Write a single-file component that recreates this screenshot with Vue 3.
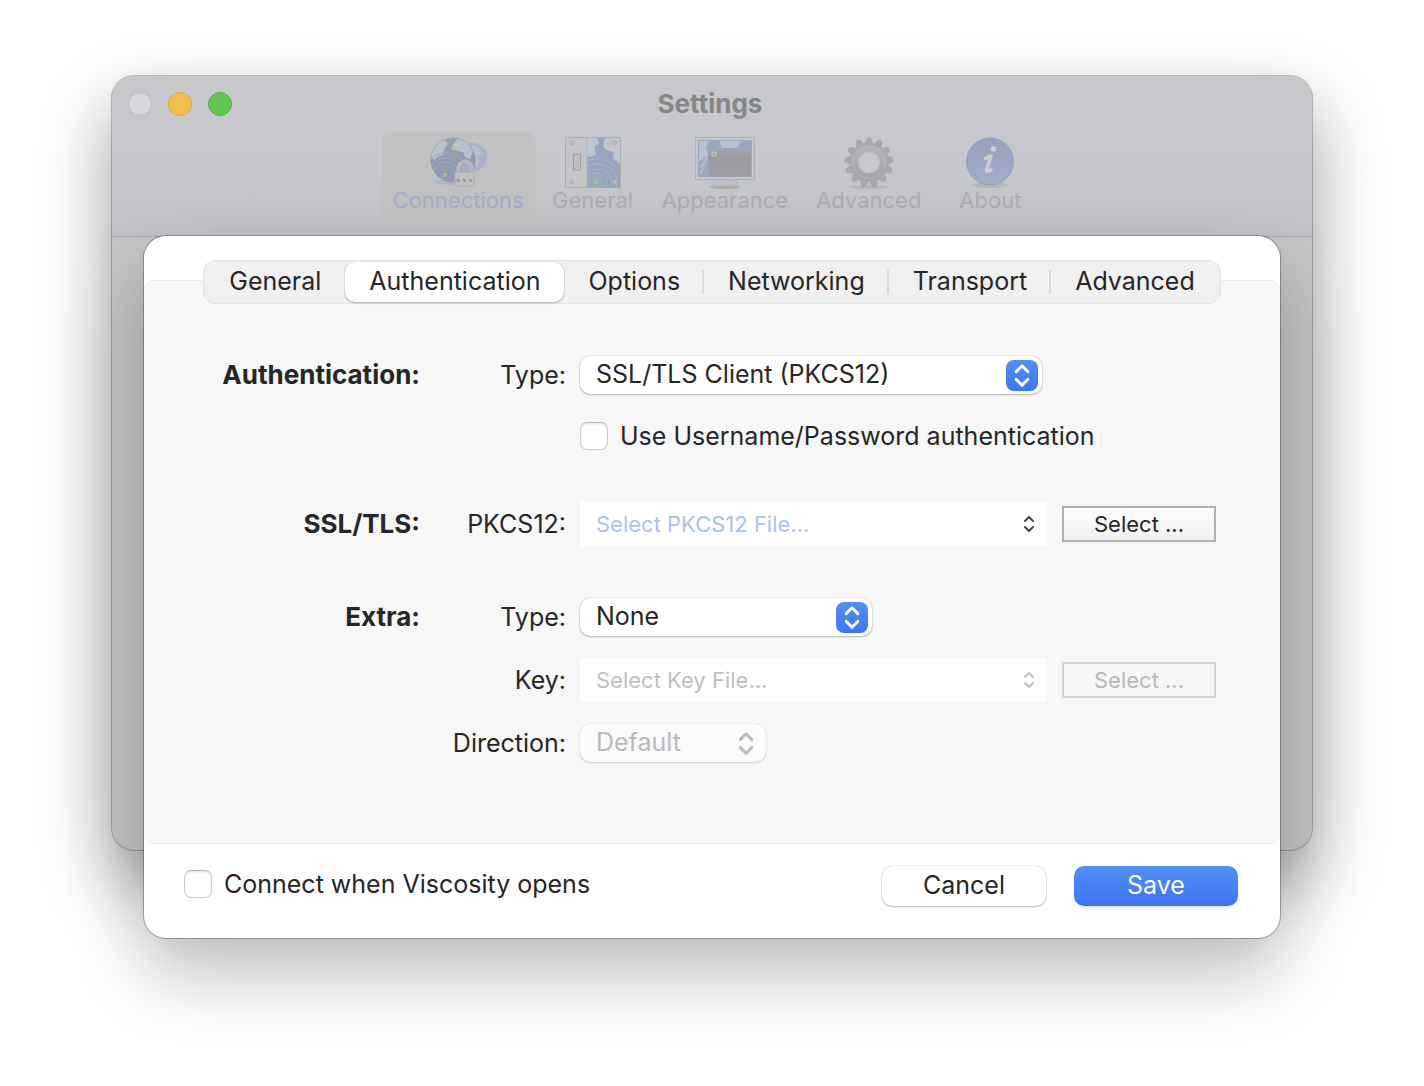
<script setup>
import { ref } from 'vue'

const tools = ['Connections', 'General', 'Appearance', 'Advanced', 'About']
const tabs = ['General', 'Authentication', 'Options', 'Networking', 'Transport', 'Advanced']
const activeTool = ref('Connections')
const activeTab = ref('Authentication')
const usePassword = ref(false)
const autoConnect = ref(false)
</script>

<template>
  <main class="stage">
    <section class="window">
      <header class="titlebar">
        <div class="title-row">
          <div class="lights">
            <button type="button" class="light close" aria-label="Close"></button>
            <button type="button" class="light minimise" aria-label="Minimise"></button>
            <button type="button" class="light zoom" aria-label="Zoom"></button>
          </div>
          <h1>Settings</h1>
        </div>
        <nav class="toolbar">
          <button
            v-for="tool in tools"
            :key="tool"
            type="button"
            class="tool"
            :class="{ active: tool === activeTool }"
            @click="activeTool = tool"
          >
            <svg v-if="tool === 'Connections'" class="tool-icon" viewBox="0 0 60 54" aria-hidden="true">
              <defs>
                <linearGradient id="globe" x1="0" y1="0" x2="0" y2="1">
                  <stop offset="0" stop-color="#8793ad" />
                  <stop offset="1" stop-color="#7480a8" />
                </linearGradient>
                <clipPath id="globe-clip"><circle cx="25" cy="24" r="22" /></clipPath>
              </defs>
              <ellipse cx="26" cy="46" rx="20" ry="3" fill="#a6a6a8" opacity=".6" />
              <circle cx="45" cy="21" r="14" fill="#a0abc2" />
              <path d="M42 9l9 2 4 6-5 3 2 6-5 6-4-9z" fill="#b4bec9" />
              <circle cx="25" cy="24" r="22.5" fill="url(#globe)" />
              <g clip-path="url(#globe-clip)">
                <path d="M6 8l10-5 4 5-4 5-1 6-4 1-5 4-5-6zM30 2l10 4 5 9-3 8-5-2-2-5-6-1-4-6z" fill="#b7c3cc" />
                <g fill="none" stroke="#8f9cbc">
                  <circle cx="18" cy="39" r="5" /><circle cx="18" cy="39" r="9" />
                  <circle cx="18" cy="39" r="13" /><circle cx="18" cy="39" r="17" /><circle cx="18" cy="39" r="22" />
                </g>
                <circle cx="26" cy="12" r="2.4" fill="#c7bb92" /><circle cx="17" cy="39" r="2.4" fill="#85bd8b" />
              </g>
              <path d="M30 37v-5a7 7 0 0 1 14 0v5" fill="#9ca7be" stroke="#b8b7b5" stroke-width="3" />
              <rect x="27" y="36" width="19" height="14" rx="1" fill="#c3c2c3" stroke="#a2a2a5" />
              <path d="M28 43h3l2 3h-4zM34 43h3l2 3h-3zM40 43h3l2 3h-3z" fill="#888a9a" />
            </svg>

            <svg v-else-if="tool === 'General'" class="tool-icon" viewBox="0 0 60 54" aria-hidden="true">
              <defs><clipPath id="plate"><rect x="24" y="2" width="33" height="49" /></clipPath></defs>
              <rect x="24" y="1" width="34" height="50" fill="#8797bb" />
              <g clip-path="url(#plate)">
                <path d="M24 1h10l2 7-5 2 2 8-5 3-4-1zM42 1h16v29l-5-6-3-1 1-7-8-2-3-4z" fill="#bdc7d0" />
                <g fill="none" stroke="#9daac5">
                  <ellipse cx="33" cy="46" rx="6" ry="5" /><ellipse cx="33" cy="46" rx="11" ry="9" />
                  <ellipse cx="33" cy="46" rx="16" ry="13" /><ellipse cx="33" cy="46" rx="21" ry="18" />
                  <ellipse cx="33" cy="46" rx="27" ry="23" />
                </g>
                <circle cx="33" cy="46" r="2.8" fill="#8dbd91" /><circle cx="46" cy="9" r="2.5" fill="#c5bd9c" />
              </g>
              <rect x="3" y="2" width="21" height="49" fill="#c4c4c5" />
              <rect x="2.5" y="1.5" width="55" height="50" fill="none" stroke="#a2a39f" />
              <path d="M24 1v50" stroke="#acadad" />
              <rect x="10.5" y="18" width="7" height="16" fill="#bcbcbd" stroke="#919193" />
              <path d="M12 26h4" stroke="#b0b0b2" />
              <g fill="#bcbcbd" stroke="#a4a4a7">
                <circle cx="8.5" cy="7" r="2" /><circle cx="8.5" cy="46" r="2" />
                <circle cx="52" cy="7" r="2" /><circle cx="52" cy="46" r="2" />
              </g>
            </svg>

            <svg v-else-if="tool === 'Appearance'" class="tool-icon" viewBox="0 0 60 54" aria-hidden="true">
              <defs>
                <linearGradient id="screen" x1="0" y1="0" x2="0" y2="1">
                  <stop offset="0" stop-color="#9a9a9d" /><stop offset=".3" stop-color="#88888b" /><stop offset="1" stop-color="#8e8e91" />
                </linearGradient>
              </defs>
              <ellipse cx="30" cy="51" rx="15" ry="2" fill="#a0a0a2" />
              <path d="M20 43h20l3 7H17z" fill="#bebec0" stroke="#acacae" />
              <rect x=".5" y="1.5" width="59" height="42" fill="#c5c6c7" stroke="#a6a7a8" />
              <rect x="3" y="4" width="54" height="37" fill="#8d9ab5" />
              <path d="M4 5h10l-3 7 2 7-9 7zM24 5h22l-5 7H27z" fill="#b3c0cf" />
              <path d="M4 38c6-4 4-10 8-15M5 31c5-2 4-9 8-12" fill="none" stroke="#a8b5ca" stroke-width="2" />
              <path d="M14 16l3-3h39v27H14z" fill="url(#screen)" />
              <circle cx="19" cy="18" r="2" fill="none" stroke="#b9bec0" stroke-width="1.5" />
            </svg>

            <svg v-else-if="tool === 'Advanced'" class="tool-icon" viewBox="0 0 60 54" aria-hidden="true">
              <defs>
                <linearGradient id="gear" gradientUnits="userSpaceOnUse" x1="0" y1="2" x2="0" y2="52">
                  <stop offset="0" stop-color="#acadb0" /><stop offset=".4" stop-color="#a6a7ab" /><stop offset="1" stop-color="#8d8e94" />
                </linearGradient>
              </defs>
              <ellipse cx="30" cy="51" rx="20" ry="2" fill="#aeaeb0" />
              <circle cx="30" cy="26.5" r="15" fill="none" stroke="url(#gear)" stroke-width="9" />
              <g fill="#9c9da1">
                <path
                  v-for="n in 13"
                  :key="n"
                  d="M25 9l2-5q.5-2.500 3-2.500t3 2.500l2 5z"
                  :transform="`rotate(${(n - 1) * 27.7} 30 26.5)`"
                />
              </g>
              <circle cx="30" cy="26.5" r="16" fill="none" stroke="#b0b1b4" />
              <circle cx="30" cy="26.5" r="10.5" fill="#c9cacd" stroke="#bcbdc0" />
            </svg>

            <svg v-else class="tool-icon" viewBox="0 0 60 54" aria-hidden="true">
              <defs>
                <linearGradient id="info" x1="0" y1="0" x2="0" y2="1">
                  <stop offset="0" stop-color="#8492b5" /><stop offset="1" stop-color="#93a2c9" />
                </linearGradient>
              </defs>
              <ellipse cx="30" cy="49" rx="18" ry="3" fill="#b0b1b3" />
              <circle cx="30" cy="25.5" r="23.5" fill="url(#info)" stroke="#8090b5" />
              <circle cx="33.5" cy="13" r="2.7" fill="#d0d3da" />
              <path d="M25.5 22.5q3-2 5.5-2.5l-4.5 14q0 3 4.5 0" fill="none" stroke="#d0d3da" stroke-width="3.5" stroke-linecap="round" />
            </svg>
            <span>{{ tool }}</span>
          </button>
        </nav>
      </header>
    </section>

    <form class="sheet" @submit.prevent>
      <div class="tabs" role="tablist">
        <button
          v-for="tab in tabs"
          :key="tab"
          type="button"
          role="tab"
          class="tab"
          :class="{ active: tab === activeTab }"
          :aria-selected="tab === activeTab"
          @click="activeTab = tab"
        >{{ tab }}</button>
      </div>

      <div class="panel">
        <section class="group loose">
          <div class="row">
            <h2>Authentication:</h2>
            <label for="auth-type">Type:</label>
            <div class="field popup wide">
              <select id="auth-type"><option>SSL/TLS Client (PKCS12)</option></select>
              <span class="stepper" aria-hidden="true">
                <svg viewBox="0 0 32 32"><path d="M10 12l6-6 6 6M10 20l6 6 6-6" /></svg>
              </span>
            </div>
          </div>
          <div class="row">
            <label class="check"><input v-model="usePassword" type="checkbox" />Use Username/Password authentication</label>
          </div>
        </section>

        <section class="group">
          <div class="row">
            <h2>SSL/TLS:</h2>
            <label for="pkcs">PKCS12:</label>
            <div class="file-line">
              <div class="field file">
                <select id="pkcs"><option>Select PKCS12 File...</option></select>
                <svg class="arrows" viewBox="0 0 12 18" aria-hidden="true"><path d="M2 6l4-4 4 4M2 12l4 4 4-4" /></svg>
              </div>
              <button type="button" class="browse">Select ...</button>
            </div>
          </div>
        </section>

        <section class="group">
          <div class="row">
            <h2>Extra:</h2>
            <label for="extra-type">Type:</label>
            <div class="field popup medium">
              <select id="extra-type"><option>None</option></select>
              <span class="stepper" aria-hidden="true">
                <svg viewBox="0 0 32 32"><path d="M10 12l6-6 6 6M10 20l6 6 6-6" /></svg>
              </span>
            </div>
          </div>
          <div class="row">
            <label for="key-file">Key:</label>
            <div class="file-line">
              <div class="field file">
                <select id="key-file" disabled><option>Select Key File...</option></select>
                <svg class="arrows" viewBox="0 0 12 18" aria-hidden="true"><path d="M2 6l4-4 4 4M2 12l4 4 4-4" /></svg>
              </div>
              <button type="button" class="browse" disabled>Select ...</button>
            </div>
          </div>
          <div class="row">
            <label for="direction">Direction:</label>
            <div class="field popup small">
              <select id="direction" disabled><option>Default</option></select>
              <span class="stepper" aria-hidden="true">
                <svg viewBox="0 0 32 32"><path d="M10 12l6-6 6 6M10 20l6 6 6-6" /></svg>
              </span>
            </div>
          </div>
        </section>
      </div>

      <footer class="actions">
        <label class="check"><input v-model="autoConnect" type="checkbox" />Connect when Viscosity opens</label>
        <div class="buttons">
          <button type="button" class="push">Cancel</button>
          <button type="submit" class="push primary">Save</button>
        </div>
      </footer>
    </form>
  </main>
</template>

<style>
body {
  margin: 0;
  background: #fff;
}
</style>

<style scoped>
* {
  box-sizing: border-box;
}
.stage {
  display: grid;
  align-content: start;
  min-height: 100vh;
  padding: 76px 112px;
  overflow: hidden;
  font-family: Inter, "Liberation Sans", sans-serif;
  font-size: 25px;
  line-height: 32px;
  color: #262626;
}
button,
select,
input {
  margin: 0;
  padding: 0;
  border: 0;
  font: inherit;
  color: inherit;
  background: none;
}
h1,
h2 {
  margin: 0;
  font-size: 26px;
  font-weight: 700;
}
.window {
  grid-area: 1 / 1;
  margin-bottom: 88px;
  border-radius: 22px;
  background: #c3c5c6;
  box-shadow: 0 0 0 1px rgba(0, 0, 0, 0.24), 0 32px 72px rgba(0, 0, 0, 0.4);
}
.titlebar {
  height: 161px;
  border-bottom: 1px solid #aaabae;
  border-radius: 22px 22px 0 0;
  background: linear-gradient(#c7c8ca, #c6c7ca 60%, #c1c2c6);
}
.title-row {
  display: grid;
  grid-template-columns: 1fr auto 1fr;
  align-items: center;
  height: 56px;
  padding: 0 20px 0 16px;
}
h1 {
  color: #858688;
}
.lights {
  display: flex;
  gap: 16px;
}
.light {
  width: 24px;
  height: 24px;
  border: 1px solid #bdbec5;
  border-radius: 50%;
  background: #d7d8de;
}
.minimise {
  border-color: #dca341;
  background: #f4bf4b;
}
.zoom {
  border-color: #52ad44;
  background: #5fc653;
}
.toolbar {
  display: flex;
  justify-content: center;
  gap: 4px;
}
.tool {
  display: flex;
  flex-direction: column;
  align-items: center;
  min-width: 106px;
  height: 90px;
  padding: 4px 12px 0;
  border-radius: 12px;
  font-size: 22px;
  line-height: 24px;
  color: #acadaf;
}
.tool.active {
  background: #c1c1c2;
  color: #a4adc6;
}
.tool-icon {
  width: 60px;
  height: 54px;
  margin-bottom: -2px;
  opacity: 0.7;
}
.sheet {
  grid-area: 1 / 1;
  z-index: 1;
  display: flex;
  flex-direction: column;
  align-items: stretch;
  margin: 160px 32px 0;
  padding-top: 24px;
  border-radius: 22px;
  background: #fff;
  box-shadow: 0 0 0 1px rgba(0, 0, 0, 0.28), 0 36px 72px rgba(0, 0, 0, 0.26);
}
.tabs {
  z-index: 1;
  display: flex;
  align-self: center;
  height: 44px;
  margin-bottom: -24px;
  padding: 1px;
  border: 1px solid #e5e5e5;
  border-radius: 12px;
  background: #f0f0f0;
}
.tab {
  display: flex;
  align-items: center;
  height: 40px;
  padding: 0 0 2px 24px;
  border-radius: 10px;
}
.tab::after {
  content: "";
  width: 2px;
  height: 24px;
  margin: 2px 0 0 22px;
}
.tab:nth-child(n + 3):not(:last-child)::after {
  background: #d9d9d9;
}
.tab.active {
  background: #fff;
  box-shadow: 0 0 1px rgba(0, 0, 0, 0.3), 0 1px 2px rgba(0, 0, 0, 0.25);
}
.panel {
  display: flex;
  flex-direction: column;
  gap: 52px;
  padding: 75px 64px 81px 76px;
  border: solid #e9e9e9;
  border-width: 1px 0;
  border-radius: 10px;
  background: #f7f7f7;
}
.group {
  display: flex;
  flex-direction: column;
  gap: 22px;
}
.group.loose {
  gap: 28px;
}
.row {
  display: grid;
  grid-template-columns: 200px 146px 1fr;
  align-items: center;
}
.row h2,
.row > label {
  text-align: right;
}
.row > label {
  grid-column: 2;
}
.field,
.file-line {
  margin-left: 14px;
}
.file-line .field {
  margin-left: 0;
}
.field {
  position: relative;
}
select {
  display: block;
  width: 100%;
  height: 100%;
  padding: 0 16px;
  appearance: none;
  opacity: 1;
}
.popup {
  height: 38px;
  border-radius: 10px;
  background: #fff;
  box-shadow: 0 0 1px rgba(0, 0, 0, 0.35), 0 1px 2px rgba(0, 0, 0, 0.25);
}
.popup select {
  padding-bottom: 2px;
}
.wide {
  width: 462px;
}
.medium {
  width: 292px;
}
.small {
  width: 186px;
  background: #fbfbfb;
  box-shadow: 0 0 1px rgba(0, 0, 0, 0.25), 0 1px 2px rgba(0, 0, 0, 0.12);
}
.stepper {
  position: absolute;
  top: 4px;
  right: 4px;
  width: 32px;
  height: 31px;
  border-radius: 8px;
  background: linear-gradient(#5090f7, #3d74f5);
  pointer-events: none;
}
.stepper svg {
  display: block;
  width: 32px;
  height: 31px;
}
path {
  stroke-linejoin: round;
}
.stepper path {
  fill: none;
  stroke: #fff;
  stroke-width: 3;
  stroke-linecap: round;
}
.small select {
  color: #b9b9b9;
}
.small .stepper {
  background: none;
}
.small .stepper path {
  stroke: #b9b9b9;
}
.file-line {
  display: flex;
  align-items: center;
  gap: 16px;
  font-size: 22px;
}
.file {
  flex: 1;
  height: 44px;
  background: #fff;
}
.file select {
  color: #adc2e9;
}
.file select:disabled {
  color: #c0c0c0;
}
.arrows {
  position: absolute;
  top: 13px;
  right: 11px;
  width: 12px;
  height: 18px;
  pointer-events: none;
}
.arrows path {
  fill: none;
  stroke: #404040;
  stroke-width: 2;
  stroke-linecap: round;
}
.file select:disabled + .arrows path {
  stroke: #c0c0c0;
}
.browse {
  width: 154px;
  height: 36px;
  border: 2px solid #b0b0b0;
  background: linear-gradient(#fcfcfc, #f1f1f1);
}
.browse:disabled {
  border-color: #d3d3d3;
  background: #f6f6f6;
  color: #b8b8b8;
}
.check {
  display: flex;
  align-items: center;
  gap: 12px;
  height: 28px;
  white-space: nowrap;
}
.row > .check {
  grid-column: 3;
  margin-left: 14px;
}
.check input {
  flex: none;
  width: 28px;
  height: 28px;
  border: 1px solid #cdcdcd;
  border-top-color: #b9b9b9;
  border-radius: 7px;
  background: #fff;
  box-shadow: inset 0 1px 2px rgba(0, 0, 0, 0.12);
  appearance: none;
}
.actions {
  display: flex;
  align-items: center;
  justify-content: space-between;
  padding: 22px 42px 32px 40px;
}
.actions .check {
  margin-bottom: 4px;
}
.buttons {
  display: flex;
  gap: 28px;
}
.push {
  width: 164px;
  height: 40px;
  padding-bottom: 2px;
  border-radius: 10px;
  background: #fff;
  box-shadow: 0 0 1px rgba(0, 0, 0, 0.35), 0 1px 2px rgba(0, 0, 0, 0.25);
}
.primary {
  background: linear-gradient(#5090f7, #3d74f5);
  box-shadow: 0 1px 2px rgba(61, 116, 245, 0.2);
  color: #fff;
}
</style>
